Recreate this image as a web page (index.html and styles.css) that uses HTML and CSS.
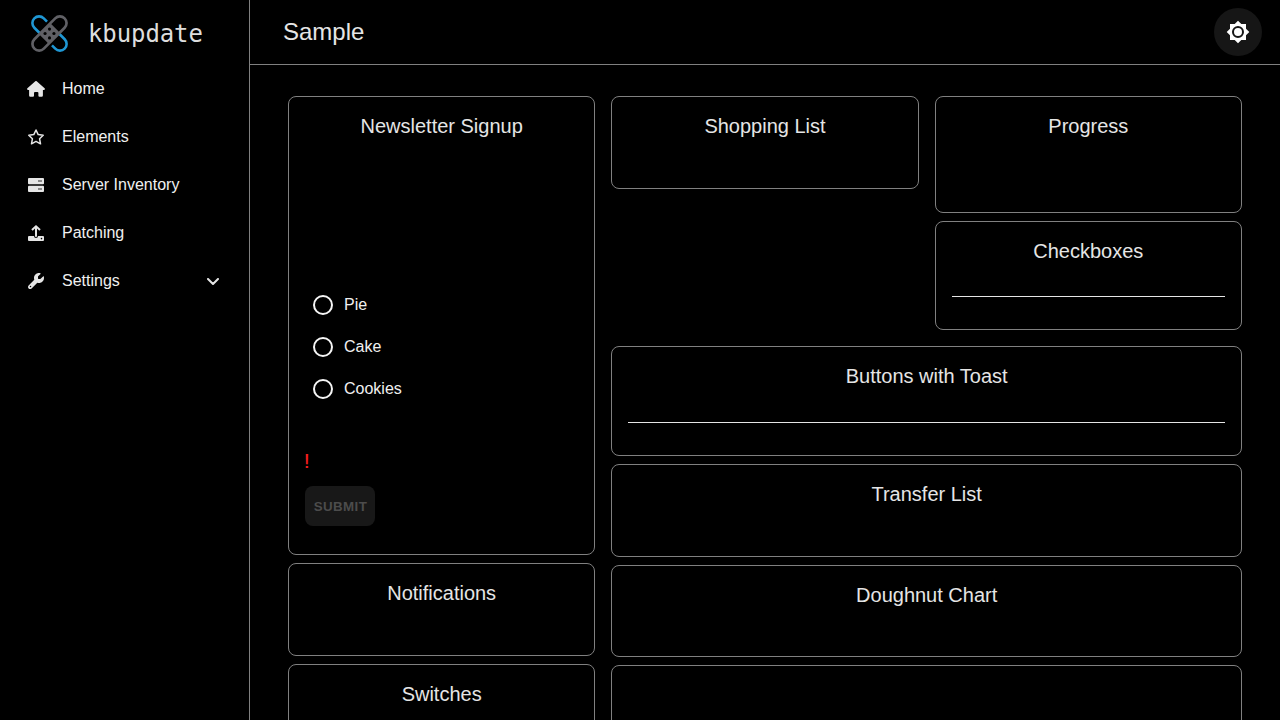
FILE: index.html
```html
<!DOCTYPE html>
<html lang="en">
<head>
<meta charset="utf-8">
<title>kbupdate</title>
<link rel="stylesheet" href="styles.css">
</head>
<body>
<div class="app">
  <aside class="sidebar">
    <div class="brand">
      <svg class="brand-mark" viewBox="0 0 40 40" fill="none">
        <g transform="rotate(45 20 20)" stroke="#1f97d4" stroke-width="2.8">
          <path d="M9 12.800H4A7.200 7.200 0 0 0 4 27.200H12"/>
          <path d="M31 27.200h5a7.200 7.200 0 0 0 0-14.400H28"/>
        </g>
        <g transform="rotate(-45 20 20)">
          <rect x="-3.100" y="12.800" width="46.200" height="14.400" rx="7.200" fill="#000" stroke="#606065" stroke-width="2.900"/>
          <rect x="11.500" y="12.600" width="17" height="14.800" fill="#606065"/>
        </g>
        <g fill="#000"><circle cx="20" cy="15.200" r="1.700"/><circle cx="15.200" cy="20" r="1.700"/><circle cx="24.800" cy="20" r="1.700"/><circle cx="20" cy="24.800" r="1.700"/></g>
      </svg>
      <span class="brand-name">kbupdate</span>
    </div>
    <nav class="nav">
      <a class="nav-item"><svg class="nav-icon" viewBox="0 0 18 16"><path d="M17.900 8a1 1 0 0 1-1 1h-1v5.500a1.300 1.300 0 0 1-1.300 1.300h-2.200a1 1 0 0 1-1-1V12a1 1 0 0 0-1-1H8a1 1 0 0 0-1 1v2.800a1 1 0 0 1-1 1H3.500a1.300 1.300 0 0 1-1.400-1.300V9H1A1 1 0 0 1 .4 7.300L8.300.3a1 1 0 0 1 1.400 0l7.900 7Q17.900 7.600 17.900 8Z"/></svg><span class="nav-label">Home</span></a>
      <a class="nav-item"><svg class="nav-icon" viewBox="0 0 18 16"><path d="m9 1 2.200 4.600 5 .7-3.600 3.500.9 5L9 12.400l-4.500 2.400.9-5L1.800 6.300l5-.7Z" fill="none" stroke="currentColor" stroke-width="1.500" stroke-linejoin="round"/></svg><span class="nav-label">Elements</span></a>
      <a class="nav-item"><svg class="nav-icon" viewBox="0 0 18 16"><rect x="1" y="1" width="16" height="6.200" rx="1"/><rect x="1" y="8.800" width="16" height="6.200" rx="1"/><path class="nav-icon-detail" d="M11 3h4v2h-4zM11 11h4v2h-4z"/></svg><span class="nav-label">Server Inventory</span></a>
      <a class="nav-item"><svg class="nav-icon" viewBox="0 0 18 16"><path d="M10 3.400V11a1 1 0 0 1-2 0V3.400L5.700 5.700 4.300 4.300 9 0l4.700 4.300-1.400 1.400ZM2 11h5a2 2 0 0 0 4 0h5a1 1 0 0 1 1 1v3a1 1 0 0 1-1 1H2a1 1 0 0 1-1-1v-3a1 1 0 0 1 1-1Zm12.500 1.800a.8.8 0 1 0 0 1.600.8.8 0 0 0 0-1.600Z" fill-rule="evenodd"/></svg><span class="nav-label">Patching</span></a>
      <a class="nav-item"><svg class="nav-icon" viewBox="0 0 512 512"><path d="M352 320c88.400 0 160-71.600 160-160 0-15.300-2.200-30.100-6.200-44.200-3.100-10.800-16.400-13.200-24.300-5.300l-76.800 76.800c-3 3-7.100 4.700-11.300 4.700H336c-8.800 0-16-7.200-16-16v-57.400c0-4.200 1.700-8.300 4.700-11.300l76.800-76.800c7.900-7.900 5.400-21.200-5.300-24.300C382.100 2.200 367.300 0 352 0c-88.400 0-160 71.600-160 160 0 19.100 3.400 37.500 9.500 54.500L19.900 396.100C7.200 408.800 0 426.100 0 444.100 0 481.600 30.400 512 67.900 512c18 0 35.300-7.200 48-19.900l181.600-181.600c17 6.200 35.400 9.500 54.500 9.500ZM80 408a24 24 0 1 1 0 48 24 24 0 0 1 0-48Z" fill-rule="evenodd"/></svg><span class="nav-label">Settings</span><svg class="chevron" viewBox="0 0 12 8"><path d="m1 1 5 5 5-5"/></svg></a>
    </nav>
  </aside>
  <div class="page">
    <header class="topbar">
      <h1 class="page-title">Sample</h1>
      <button class="theme-toggle" aria-label="Toggle theme"><svg class="sun" viewBox="0 0 24 24"><path d="M20 8.690V4h-4.690L12 .69 8.690 4H4v4.690L.69 12 4 15.310V20h4.690L12 23.310 15.310 20H20v-4.690L23.310 12 20 8.690ZM12 18a6 6 0 1 1 0-12 6 6 0 0 1 0 12Zm0-10a4 4 0 1 0 0 8 4 4 0 0 0 0-8Z"/></svg></button>
    </header>
    <main class="board">
      <div class="stack">
        <section class="card signup">
          <h2 class="card-title">Newsletter Signup</h2>
          <div class="options">
            <label class="option"><span class="radio"></span>Pie</label>
            <label class="option"><span class="radio"></span>Cake</label>
            <label class="option"><span class="radio"></span>Cookies</label>
          </div>
          <p class="error">!</p>
          <button class="submit" disabled>SUBMIT</button>
        </section>
        <section class="card"><h2 class="card-title">Notifications</h2></section>
        <section class="card"><h2 class="card-title">Switches</h2></section>
      </div>
      <div class="main-column">
        <div class="pair">
          <div class="stack"><section class="card"><h2 class="card-title">Shopping List</h2></section></div>
          <div class="stack">
            <section class="card progress"><h2 class="card-title">Progress</h2></section>
            <section class="card checks"><h2 class="card-title">Checkboxes</h2><hr class="rule"></section>
          </div>
        </div>
        <div class="stack">
          <section class="card toasts"><h2 class="card-title">Buttons with Toast</h2><hr class="rule"></section>
          <section class="card"><h2 class="card-title">Transfer List</h2></section>
          <section class="card"><h2 class="card-title">Doughnut Chart</h2></section>
          <section class="card"></section>
        </div>
      </div>
    </main>
  </div>
</div>
</body>
</html>
```
FILE: styles.css
```css
* { box-sizing: border-box; }
html { background: #000; }
body { margin: 0; background: #000; color: #e5e5e5; font: 16px/24px "Liberation Sans", Arial, sans-serif; overflow: hidden; }
h1, h2, p { margin: 0; font-weight: 400; }
.app { display: flex; height: 720px; overflow: hidden; }
.sidebar { flex: none; width: 250px; border-right: 1px solid #808080; }
.brand { display: flex; align-items: center; height: 64px; padding: 2px 0 0 31px; }
.brand-mark { width: 37px; height: 37px; overflow: visible; }
.brand-name { margin: 2px 0 0 20px; font: 24px/32px "DejaVu Sans Mono", monospace; letter-spacing: -0.1px; color: #ddd; }
.nav-item { display: flex; align-items: center; height: 48px; padding: 0 30px 0 27px; color: #f0f0f0; }
.nav-label { padding-top: 1px; }
.nav-icon { width: 18px; height: 16px; margin: 2px 17px 0 0; fill: currentColor; color: #e5e5e5; }
.nav-icon-detail { fill: #888; }
.chevron { width: 12px; height: 8px; margin: 3px 0 0 auto; fill: none; stroke: #e5e5e5; stroke-width: 2; stroke-linecap: round; stroke-linejoin: round; }
.page { flex: 1; min-width: 0; }
.topbar { display: flex; align-items: center; justify-content: space-between; height: 65px; padding: 0 18px 1px 33px; border-bottom: 1px solid #808080; }
.page-title { font-size: 24px; line-height: 32px; }
.theme-toggle { display: grid; place-items: center; width: 48px; height: 48px; padding: 0; border: 0; border-radius: 50%; background: #161616; }
.sun { width: 24px; height: 24px; fill: #fff; }
.board { display: grid; grid-template-columns: 307.33px 1fr; gap: 16px; align-items: start; padding: 31px 38px 0; }
.stack { display: flex; flex-direction: column; gap: 8px; }
.main-column { display: grid; gap: 16px; }
.pair { display: grid; grid-template-columns: 1fr 1fr; gap: 16px; }
.card { flex: none; height: 92.6px; padding: 15px 16px; border: 1px solid #808080; border-radius: 8px; }
.card-title { font-size: 20px; line-height: 28px; text-align: center; }
.signup { height: 459px; }
.options { padding: 144px 0 0 8px; }
.option { display: flex; align-items: center; gap: 11px; height: 42px; color: #f0f0f0; }
.radio { width: 20px; height: 20px; border: 2px solid #f5f5f5; border-radius: 50%; }
.error { margin: 39px 0 0 -1px; color: #ff1f1f; font-size: 20px; line-height: 24px; -webkit-text-stroke: 0.2px #ff1f1f; }
.submit { display: block; width: 70px; height: 40px; margin-top: 13px; padding: 1px 0 0 1px; border: 0; border-radius: 8px; background: #181818; color: #4c4c4c; font: bold 13.33px/20px "Liberation Sans", Arial, sans-serif; letter-spacing: 0.4px; }
.progress { height: 117px; }
.checks { height: 109px; }
.toasts { height: 110px; }
.rule { height: 1px; margin: 31px 0 0; border: 0; background: #e5e5e5; }
.toasts .rule { margin-top: 32px; }
```
